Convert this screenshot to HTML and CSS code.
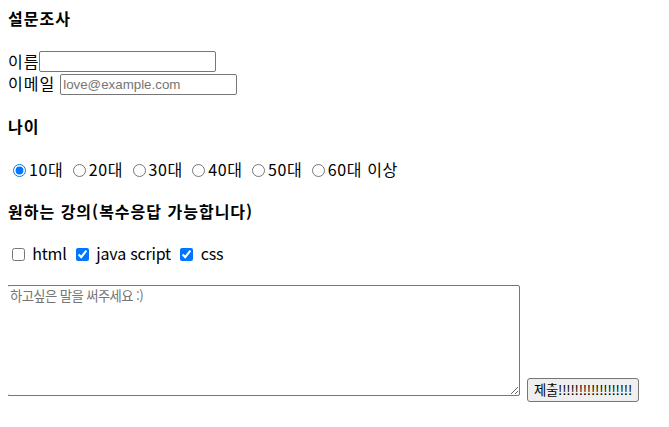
FILE: index.html
```html
<!DOCTYPE html>
<html lang="ko">
<head>
<meta charset="utf-8">
<title>설문조사</title>
<link rel="stylesheet" href="styles.css">
</head>
<body>
<form class="survey">
  <h4 class="title">설문조사</h4>
  <div class="field"><label for="name">이름</label><input class="text-input" id="name" type="text"></div>
  <div class="field"><label for="email">이메일</label> <input class="text-input email" id="email" type="email" placeholder="love@example.com"></div>

  <h4 class="heading">나이</h4>
  <div class="options radios">
    <label class="opt"><input type="radio" name="age" checked>10대</label>
    <label class="opt"><input type="radio" name="age">20대</label>
    <label class="opt"><input type="radio" name="age">30대</label>
    <label class="opt"><input type="radio" name="age">40대</label>
    <label class="opt"><input type="radio" name="age">50대</label>
    <label class="opt"><input type="radio" name="age">60대 이상</label>
  </div>

  <h4 class="heading">원하는 강의(복수응답 가능합니다)</h4>
  <div class="options checks">
    <label class="opt"><input type="checkbox"> html</label>
    <label class="opt"><input type="checkbox" checked> java script</label>
    <label class="opt"><input type="checkbox" checked> css</label>
  </div>

  <div class="message">
    <textarea class="memo" placeholder="하고싶은 말을 써주세요 :)"></textarea>
    <button class="submit" type="submit">제출!!!!!!!!!!!!!!!!!!</button>
  </div>
</form>
</body>
</html>
```

FILE: styles.css
```css
html, body {
  background: #ffffff;
}

body {
  margin: 8px;
  color: #000000;
  font-family: "Noto Sans CJK KR", "Noto Sans", sans-serif;
  font-size: 16px;
  line-height: 21.3px;
}

.survey {
  margin: 0;
  display: flex;
  flex-direction: column;
  align-items: flex-start;
}

.title,
.heading {
  font-size: 16px;
  font-weight: 700;
  line-height: 21.3px;
  letter-spacing: 1px;
  margin: 0 0 21px;
}

.heading {
  margin-top: 21px;
}

.field {
  display: flex;
  align-items: center;
  height: 22.5px;
  white-space: pre;
}

.field label {
  line-height: 21.3px;
  letter-spacing: 1px;
}

.text-input {
  box-sizing: border-box;
  width: 177px;
  height: 21px;
  margin: 0;
  padding: 1px 2px;
  border: 1px solid #767676;
  border-radius: 2px;
  font-family: "Liberation Sans", Arial, sans-serif;
  font-size: 13.33px;
  color: #000;
  background: #fff;
}

.text-input.email {
  margin-left: 5px;
}

.text-input::placeholder {
  color: #757575;
}

.options {
  line-height: 21.3px;
  white-space: nowrap;
}

.opt input {
  vertical-align: -1px;
}

.radios .opt {
  letter-spacing: 0.6px;
}

.radios .opt input {
  margin: 3px 3px 0 5px;
}

.checks .opt {
  letter-spacing: -0.2px;
  margin-right: 1px;
}

.checks .opt input {
  margin: 3px 3px 3px 4px;
}

.message {
  display: flex;
  align-items: flex-end;
  gap: 7px;
  margin-top: 21px;
}

.memo {
  box-sizing: border-box;
  width: 513px;
  height: 111px;
  margin: 0 0 6px -1px;
  padding: 2px;
  border: 1px solid #767676;
  border-radius: 2px;
  font-family: "DejaVu Sans Mono", "Noto Sans CJK KR", monospace;
  font-size: 13.33px;
  line-height: 16px;
  resize: both;
}

.memo::placeholder {
  color: #757575;
  font-family: "Noto Sans CJK KR", monospace;
  letter-spacing: -0.6px;
}

.submit {
  box-sizing: border-box;
  height: 24px;
  padding: 0 6px;
  border: 1px solid #767676;
  border-radius: 3px;
  background: #efefef;
  color: #000;
  font-family: "Noto Sans CJK KR", sans-serif;
  font-size: 13.33px;
  line-height: 20px;
  letter-spacing: -0.2px;
}
```
